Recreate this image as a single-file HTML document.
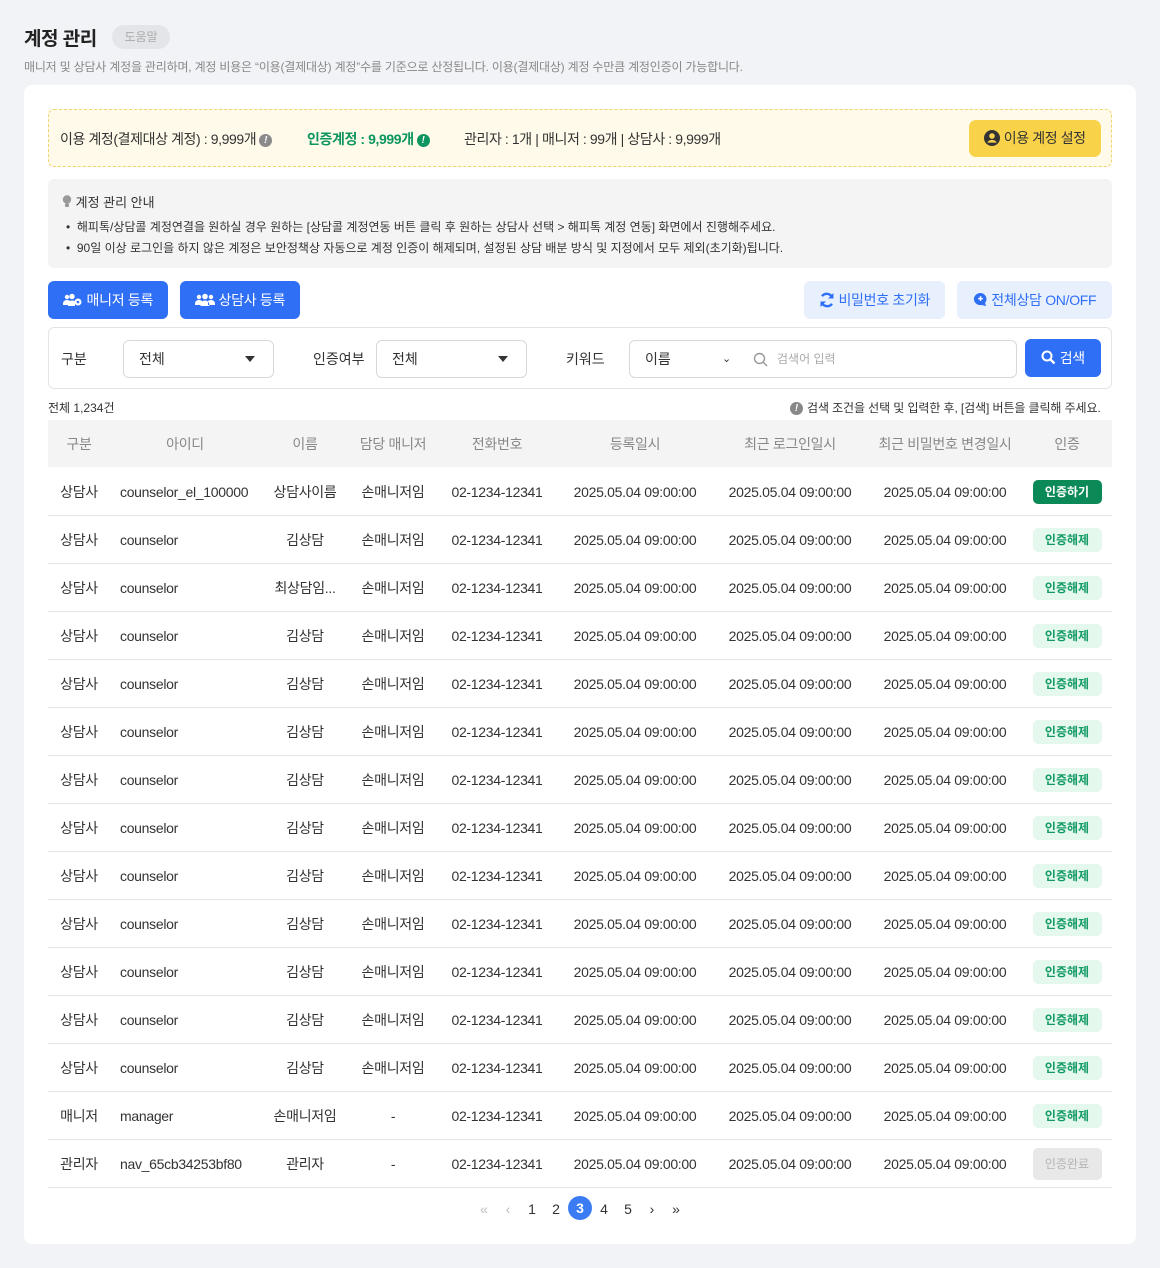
<!DOCTYPE html>
<html><head><meta charset="utf-8">
<style>
*{box-sizing:border-box;margin:0;padding:0}
body{width:1160px;height:1268px;background:#f2f3f6;font-family:"Liberation Sans","Noto Sans CJK KR",sans-serif;color:#333;position:relative;overflow:hidden}
.abs{position:absolute}
h1{position:absolute;left:24px;top:24px;font-size:19px;font-weight:700;color:#222;letter-spacing:-0.5px}
.help{position:absolute;left:112px;top:25px;width:58px;height:24px;border-radius:12px;background:#e4e5e8;color:#aaa;font-size:12px;text-align:center;line-height:24px}
.desc{position:absolute;left:24px;top:58px;font-size:12px;color:#888;letter-spacing:-0.2px}
.card{position:absolute;left:24px;top:85px;width:1112px;height:1159px;background:#fff;border-radius:8px}
.summary{position:absolute;left:48px;top:109px;width:1064px;height:58px;background:#fffaea;border:1px dashed #f0d470;border-radius:6px;font-size:14px;color:#333;letter-spacing:-0.4px}
.summary span{position:absolute;top:19px;white-space:nowrap}
.ic{display:inline-block;width:13px;height:13px;border-radius:50%;color:#fff;font-size:10px;font-weight:700;text-align:center;line-height:13px;vertical-align:1px;margin-left:3px;letter-spacing:0}
.ybtn{position:absolute;left:920px;top:10px;width:132px;height:37px;background:#f8d34a;border-radius:7px;font-size:14px;color:#333;text-align:center;line-height:37px}
.guide{position:absolute;left:48px;top:179px;width:1064px;height:89px;background:#f4f4f5;border-radius:6px;font-size:12px;color:#333}
.btn{position:absolute;height:38px;border-radius:6px;font-size:14px;text-align:center;line-height:38px;letter-spacing:-0.3px}
.blue{background:#2f6ff5;color:#fff}
.lb{background:#e8f0fe;color:#2f6ff5}
.filter{position:absolute;left:48px;top:327px;width:1064px;height:62px;border:1px solid #e4e4e6;border-radius:6px;font-size:14px}
.sel{position:absolute;top:12px;height:38px;border:1px solid #d8d8dc;border-radius:6px;padding-left:15px;line-height:36px}
.tri{position:absolute;right:18px;top:15px;width:0;height:0;border-left:5px solid transparent;border-right:5px solid transparent;border-top:6px solid #333}
table{position:absolute;left:48px;top:420px;width:1064px;border-collapse:collapse;table-layout:fixed;font-size:14px;letter-spacing:-0.3px}
th{height:47px;background:#f4f4f5;color:#888;font-weight:400;font-size:14px}
td{height:48px;border-bottom:1px solid #e6e6e8;text-align:center;color:#333;white-space:nowrap;overflow:hidden;padding-top:2px}
td.l{text-align:left;padding-left:10px}
.b{display:inline-block;width:69px;height:24px;line-height:24px;border-radius:5px;font-size:12px;font-weight:700;letter-spacing:0}
.b1{background:#0b8a58;color:#fff}
.b2{background:#e4f8ee;color:#139a62}
.b3{background:#e8e8e8;color:#b5b5b5;height:32px;line-height:32px;font-weight:400}
.pg{position:absolute;top:1198px;font-size:14px;color:#333;width:24px;text-align:center;line-height:22px}
</style></head><body>
<h1>계정 관리</h1>
<div class="help">도움말</div>
<div class="desc">매니저 및 상담사 계정을 관리하며, 계정 비용은 “이용(결제대상) 계정”수를 기준으로 산정됩니다. 이용(결제대상) 계정 수만큼 계정인증이 가능합니다.</div>
<div class="card"></div>
<div class="summary">
<span style="left:11px">이용 계정(결제대상 계정) : 9,999개<i class="ic" style="background:#8a8a8a">!</i></span>
<span style="left:258px;color:#0d9660;font-weight:700">인증계정 : 9,999개<i class="ic" style="background:#0d9660">!</i></span>
<span style="left:415px">관리자 : 1개 | 매니저 : 99개 | 상담사 : 9,999개</span>
<div class="ybtn"><svg width="16" height="16" viewBox="0 0 16 16" style="vertical-align:-3px"><circle cx="8" cy="8" r="8" fill="#333"/><circle cx="8" cy="6" r="2.8" fill="#f8d34a"/><path d="M3.2 12.6c1.2-2 3-2.6 4.8-2.6s3.6.6 4.8 2.6" fill="#f8d34a"/></svg> 이용 계정 설정</div>
</div>
<div class="guide">
<div class="abs" style="left:14px;top:13px;font-size:13px"><svg width="10" height="13" viewBox="0 0 10 13" style="vertical-align:-1px"><circle cx="5" cy="4.5" r="4.2" fill="#999"/><rect x="3" y="8.5" width="4" height="3.5" rx="1" fill="#999"/></svg> 계정 관리 안내</div>
<div class="abs" style="left:18px;top:39px">•&nbsp; 해피톡/상담콜 계정연결을 원하실 경우 원하는 [상담콜 계정연동 버튼 클릭 후 원하는 상담사 선택 &gt; 해피톡 계정 연동] 화면에서 진행해주세요.</div>
<div class="abs" style="left:18px;top:60px">•&nbsp; 90일 이상 로그인을 하지 않은 계정은 보안정책상 자동으로 계정 인증이 해제되며, 설정된 상담 배분 방식 및 지정에서 모두 제외(초기화)됩니다.</div>
</div>
<div class="btn blue" style="left:48px;top:281px;width:120px"><svg width="20" height="14" viewBox="0 0 20 14" style="vertical-align:-2px"><circle cx="4" cy="4" r="2.2" fill="#fff"/><circle cx="9" cy="3.5" r="2.7" fill="#fff"/><path d="M0 11c0-3 2-4 4-4s3 1 3 1v4H0zM5 13c0-4 2-5.5 4-5.5s3 .8 3 .8V13z" fill="#fff"/><circle cx="15" cy="9" r="3.5" fill="#fff"/><circle cx="15" cy="9" r="1.3" fill="#2f6ff5"/></svg> 매니저 등록</div>
<div class="btn blue" style="left:180px;top:281px;width:120px"><svg width="20" height="14" viewBox="0 0 20 14" style="vertical-align:-2px"><circle cx="4" cy="4" r="2.2" fill="#fff"/><circle cx="16" cy="4" r="2.2" fill="#fff"/><circle cx="10" cy="3.5" r="2.8" fill="#fff"/><path d="M0 11c0-3 2-4 4-4s3 1 3 1v4H0zM20 11c0-3-2-4-4-4s-3 1-3 1v4h7zM5.5 13c0-4 2.3-5.5 4.5-5.5s4.5 1.5 4.5 5.5z" fill="#fff"/></svg> 상담사 등록</div>
<div class="btn lb" style="left:804px;top:281px;width:141px"><svg width="16" height="16" viewBox="0 0 16 16" style="vertical-align:-3px"><path d="M13.5 6A6 6 0 0 0 3 4.2M2.5 10A6 6 0 0 0 13 11.8" stroke="#2f6ff5" stroke-width="2.4" fill="none"/><path d="M14.5 1v5.5H9zM1.5 15V9.5H7z" fill="#2f6ff5"/></svg> 비밀번호 초기화</div>
<div class="btn lb" style="left:957px;top:281px;width:155px"><svg width="15" height="15" viewBox="0 0 16 16" style="vertical-align:-2px"><path d="M8 1a7 6.5 0 1 0 0 13 7 7 0 0 0 1.5-.2L14 15l-1.2-3.3A6.5 6.5 0 0 0 8 1z" fill="#2f6ff5"/><path d="M8 4.5v5M5.5 7h5" stroke="#fff" stroke-width="1.6"/></svg> 전체상담 ON/OFF</div>
<div class="filter">
<div class="abs" style="left:12px;top:21px">구분</div>
<div class="sel" style="left:74px;width:151px">전체<i class="tri"></i></div>
<div class="abs" style="left:264px;top:21px">인증여부</div>
<div class="sel" style="left:327px;width:151px">전체<i class="tri"></i></div>
<div class="abs" style="left:517px;top:21px">키워드</div>
<div class="sel" style="left:580px;width:388px">이름<span class="abs" style="left:92px;top:0;font-size:11px">⌄</span>
<svg class="abs" style="left:123px;top:11px" width="15" height="15" viewBox="0 0 15 15"><circle cx="6.5" cy="6.5" r="5" stroke="#999" stroke-width="1.4" fill="none"/><path d="M10 10l4 4" stroke="#999" stroke-width="1.4"/></svg>
<span class="abs" style="left:147px;top:0;color:#aaa;font-size:12px">검색어 입력</span></div>
<div class="btn blue" style="left:976px;top:11px;width:76px;height:38px"><svg width="15" height="15" viewBox="0 0 15 15" style="vertical-align:-2px"><circle cx="6" cy="6" r="4.5" stroke="#fff" stroke-width="2" fill="none"/><path d="M9.5 9.5l4 4" stroke="#fff" stroke-width="2.4"/></svg> 검색</div>
</div>
<div class="abs" style="left:48px;top:399px;font-size:12px">전체 1,234건</div>
<div class="abs" style="left:790px;top:399px;font-size:12px;letter-spacing:-0.1px"><i class="ic" style="background:#888;margin:0 4px 0 0">!</i>검색 조건을 선택 및 입력한 후, [검색] 버튼을 클릭해 주세요.</div>
<table>
<colgroup><col style="width:62px"><col style="width:150px"><col style="width:90px"><col style="width:86px"><col style="width:122px"><col style="width:154px"><col style="width:156px"><col style="width:154px"><col style="width:90px"></colgroup>
<tr><th>구분</th><th>아이디</th><th>이름</th><th>담당 매니저</th><th>전화번호</th><th>등록일시</th><th>최근 로그인일시</th><th>최근 비밀번호 변경일시</th><th>인증</th></tr>
<tr><td>상담사</td><td class="l">counselor_el_100000</td><td>상담사이름</td><td>손매니저임</td><td>02-1234-12341</td><td>2025.05.04 09:00:00</td><td>2025.05.04 09:00:00</td><td>2025.05.04 09:00:00</td><td><span class="b b1">인증하기</span></td></tr>
<tr><td>상담사</td><td class="l">counselor</td><td>김상담</td><td>손매니저임</td><td>02-1234-12341</td><td>2025.05.04 09:00:00</td><td>2025.05.04 09:00:00</td><td>2025.05.04 09:00:00</td><td><span class="b b2">인증해제</span></td></tr>
<tr><td>상담사</td><td class="l">counselor</td><td>최상담임...</td><td>손매니저임</td><td>02-1234-12341</td><td>2025.05.04 09:00:00</td><td>2025.05.04 09:00:00</td><td>2025.05.04 09:00:00</td><td><span class="b b2">인증해제</span></td></tr>
<tr><td>상담사</td><td class="l">counselor</td><td>김상담</td><td>손매니저임</td><td>02-1234-12341</td><td>2025.05.04 09:00:00</td><td>2025.05.04 09:00:00</td><td>2025.05.04 09:00:00</td><td><span class="b b2">인증해제</span></td></tr>
<tr><td>상담사</td><td class="l">counselor</td><td>김상담</td><td>손매니저임</td><td>02-1234-12341</td><td>2025.05.04 09:00:00</td><td>2025.05.04 09:00:00</td><td>2025.05.04 09:00:00</td><td><span class="b b2">인증해제</span></td></tr>
<tr><td>상담사</td><td class="l">counselor</td><td>김상담</td><td>손매니저임</td><td>02-1234-12341</td><td>2025.05.04 09:00:00</td><td>2025.05.04 09:00:00</td><td>2025.05.04 09:00:00</td><td><span class="b b2">인증해제</span></td></tr>
<tr><td>상담사</td><td class="l">counselor</td><td>김상담</td><td>손매니저임</td><td>02-1234-12341</td><td>2025.05.04 09:00:00</td><td>2025.05.04 09:00:00</td><td>2025.05.04 09:00:00</td><td><span class="b b2">인증해제</span></td></tr>
<tr><td>상담사</td><td class="l">counselor</td><td>김상담</td><td>손매니저임</td><td>02-1234-12341</td><td>2025.05.04 09:00:00</td><td>2025.05.04 09:00:00</td><td>2025.05.04 09:00:00</td><td><span class="b b2">인증해제</span></td></tr>
<tr><td>상담사</td><td class="l">counselor</td><td>김상담</td><td>손매니저임</td><td>02-1234-12341</td><td>2025.05.04 09:00:00</td><td>2025.05.04 09:00:00</td><td>2025.05.04 09:00:00</td><td><span class="b b2">인증해제</span></td></tr>
<tr><td>상담사</td><td class="l">counselor</td><td>김상담</td><td>손매니저임</td><td>02-1234-12341</td><td>2025.05.04 09:00:00</td><td>2025.05.04 09:00:00</td><td>2025.05.04 09:00:00</td><td><span class="b b2">인증해제</span></td></tr>
<tr><td>상담사</td><td class="l">counselor</td><td>김상담</td><td>손매니저임</td><td>02-1234-12341</td><td>2025.05.04 09:00:00</td><td>2025.05.04 09:00:00</td><td>2025.05.04 09:00:00</td><td><span class="b b2">인증해제</span></td></tr>
<tr><td>상담사</td><td class="l">counselor</td><td>김상담</td><td>손매니저임</td><td>02-1234-12341</td><td>2025.05.04 09:00:00</td><td>2025.05.04 09:00:00</td><td>2025.05.04 09:00:00</td><td><span class="b b2">인증해제</span></td></tr>
<tr><td>상담사</td><td class="l">counselor</td><td>김상담</td><td>손매니저임</td><td>02-1234-12341</td><td>2025.05.04 09:00:00</td><td>2025.05.04 09:00:00</td><td>2025.05.04 09:00:00</td><td><span class="b b2">인증해제</span></td></tr>
<tr><td>매니저</td><td class="l">manager</td><td>손매니저임</td><td>-</td><td>02-1234-12341</td><td>2025.05.04 09:00:00</td><td>2025.05.04 09:00:00</td><td>2025.05.04 09:00:00</td><td><span class="b b2">인증해제</span></td></tr>
<tr><td>관리자</td><td class="l">nav_65cb34253bf80</td><td>관리자</td><td>-</td><td>02-1234-12341</td><td>2025.05.04 09:00:00</td><td>2025.05.04 09:00:00</td><td>2025.05.04 09:00:00</td><td><span class="b b3">인증완료</span></td></tr>
</table>
<div class="pg" style="left:472px;color:#bbb">«</div>
<div class="pg" style="left:496px;color:#bbb">‹</div>
<div class="pg" style="left:520px">1</div>
<div class="pg" style="left:544px">2</div>
<div class="pg" style="left:568px;background:#3b7cf5;color:#fff;border-radius:12px;font-weight:700;height:24px;line-height:24px;top:1196px">3</div>
<div class="pg" style="left:592px">4</div>
<div class="pg" style="left:616px">5</div>
<div class="pg" style="left:640px">›</div>
<div class="pg" style="left:664px">»</div>
</body></html>
